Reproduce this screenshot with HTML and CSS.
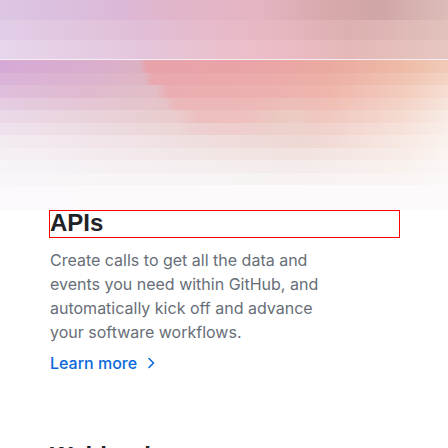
FILE: index.html
```html
<!DOCTYPE html>
<html lang="en">
<head>
<meta charset="utf-8">
<title>APIs</title>
<link rel="stylesheet" href="styles.css">
</head>
<body>
<div class="hero" aria-hidden="true">
  <div class="strip t1"></div>
  <div class="strip t12"></div>
  <div class="strip t2"></div>
  <div class="strip line"></div>
  <div class="strip s1"></div>
  <div class="strip s12"></div>
  <div class="strip s2"></div>
  <div class="strip s23"></div>
  <div class="strip s3"></div>
  <div class="strip s34"></div>
  <div class="strip s4"></div>
  <div class="strip s45"></div>
  <div class="strip s5"></div>
  <div class="strip s56"></div>
  <div class="strip s6"></div>
</div>
<main class="content">
  <h3 class="title">APIs</h3>
  <p class="desc">Create calls to get all the data and events you need within GitHub, and automatically kick off and advance your software workflows.</p>
  <a class="link" href="#">Learn more
    <svg class="chev" width="16" height="16" viewBox="0 0 16 16" aria-hidden="true"><path d="M6 3.5 L10.5 8 L6 12.5" fill="none" stroke="currentColor" stroke-width="1.6" stroke-linecap="round" stroke-linejoin="round"/></svg>
  </a>
  <h3 class="next">Webhooks</h3>
</main>
</body>
</html>
```

FILE: styles.css
```css
html, body {
  margin: 0;
  padding: 0;
  background: #ffffff;
  overflow: hidden;
}
body {
  width: 448px;
  height: 448px;
  font-family: "Inter", "Noto Sans", sans-serif;
}
.hero {
  height: 210px;
  display: flex;
  flex-direction: column;
}
.strip {
  flex: none;
}
.t1 {
  height: 20px;
  background: linear-gradient(90deg, #dcc6e4 0px, #dcb8d8 120px, #e0b6cc 160px, #e6b4c2 260px, #d8a8aa 330px, #d0a6a6 380px, #dcbcb8 448px);
}
.t12 {
  height: 20px;
  background: linear-gradient(90deg, #e2cee8 0px, #e1bed7 140px, #e7bac9 220px, #e7b6c0 280px, #dcb0b0 350px, #e1c1bc 448px);
}
.t2 {
  height: 19px;
  background: linear-gradient(90deg, #e7d6ec 0px, #e4c6dc 140px, #eac0cc 220px, #ecbcc6 280px, #e4b8b8 350px, #e6c6c0 448px);
}
.line {
  height: 1px;
  background: #f6eef3;
}
.s1 {
  height: 13px;
  background: linear-gradient(90deg, #d6aad6 0px, #daaecc 100px, #dcb2c2 140px, #e8a2aa 147px, #eaa4a8 250px, #eaaaa0 330px, #eebaa6 400px, #f0cab6 448px);
}
.s12 {
  height: 12px;
  background: linear-gradient(90deg, #dab4d9 0px, #dcb4cf 80px, #dfb6c4 145px, #e9a8ae 152px, #ebaaac 250px, #ecb0a6 330px, #f0c2b1 400px, #f3d4c4 448px);
}
.s2 {
  height: 13px;
  background: linear-gradient(90deg, #dfbedc 0px, #dfbad0 80px, #e2bec6 155px, #eaaeb2 168px, #ecb0b0 260px, #efb6ac 330px, #f2cbbc 400px, #f6ded2 448px);
}
.s23 {
  height: 12px;
  background: linear-gradient(90deg, #e5cce2 0px, #e4c6d6 80px, #e5c4c8 165px, #ebb8ba 175px, #ecb7b8 200px, #edb8b8 250px, #ecbeb9 290px, #f0bfb6 330px, #f3d2c6 400px, #f7e4db 448px);
}
.s3 {
  height: 13px;
  background: linear-gradient(90deg, #ebd9e9 0px, #e9d3dc 80px, #e9cccc 175px, #edbfbf 200px, #eebfbe 240px, #ebcbc4 290px, #f0c6bf 320px, #f4dad0 400px, #f8ebe4 448px);
}
.s34 {
  height: 12px;
  background: linear-gradient(90deg, #efe2ee 0px, #eddce4 80px, #ecd6d6 175px, #eecfcf 200px, #eecdcc 240px, #ecd2cc 290px, #f0d0ca 320px, #f6e1d9 400px, #f9eee9 448px);
}
.s4 {
  height: 13px;
  background: linear-gradient(90deg, #f3ebf2 0px, #f1e5ea 100px, #efdede 200px, #eed8d4 300px, #f2dad6 330px, #f7e8e2 400px, #faf2ee 448px);
}
.s45 {
  height: 12px;
  background: linear-gradient(90deg, #f5eff4 0px, #f3eaee 100px, #f2e6e6 200px, #f1e2df 300px, #f8ece8 400px, #faf4f1 448px);
}
.s5 {
  height: 13px;
  background: linear-gradient(90deg, #f7f3f7 0px, #f5eff1 150px, #f4ecea 300px, #f8f1ee 400px, #fbf7f5 448px);
}
.s56 {
  height: 12px;
  background: linear-gradient(90deg, #f9f6f9 0px, #f8f4f6 150px, #f8f3f2 300px, #faf5f4 400px, #fbf8f7 448px);
}
.s6 {
  height: 25px;
  background: linear-gradient(90deg, #fbf9fb 0px, #fcfafa 448px);
}
.content {
  padding-left: 49px;
}
.title {
  margin: 0;
  width: 349px;
  border: 1px solid #ff0000;
  padding: 0 0 2px 0;
  font-family: "Liberation Sans", Arial, sans-serif;
  font-weight: 700;
  font-size: 24px;
  line-height: 24px;
  color: #1f2328;
}
.desc {
  margin: 10px 0 0 1px;
  width: 300px;
  font-size: 16px;
  line-height: 24px;
  color: #676e77;
}
.link {
  display: inline-flex;
  align-items: center;
  gap: 6px;
  margin: 7px 0 0 1px;
  font-size: 16px;
  line-height: 24px;
  font-weight: 500;
  color: #0969da;
  text-decoration: none;
}
.chev {
  display: block;
}
.next {
  margin: 69px 0 0 1px;
  font-family: "Liberation Sans", Arial, sans-serif;
  font-weight: 700;
  font-size: 24px;
  line-height: 24px;
  color: #1f2328;
}
```
